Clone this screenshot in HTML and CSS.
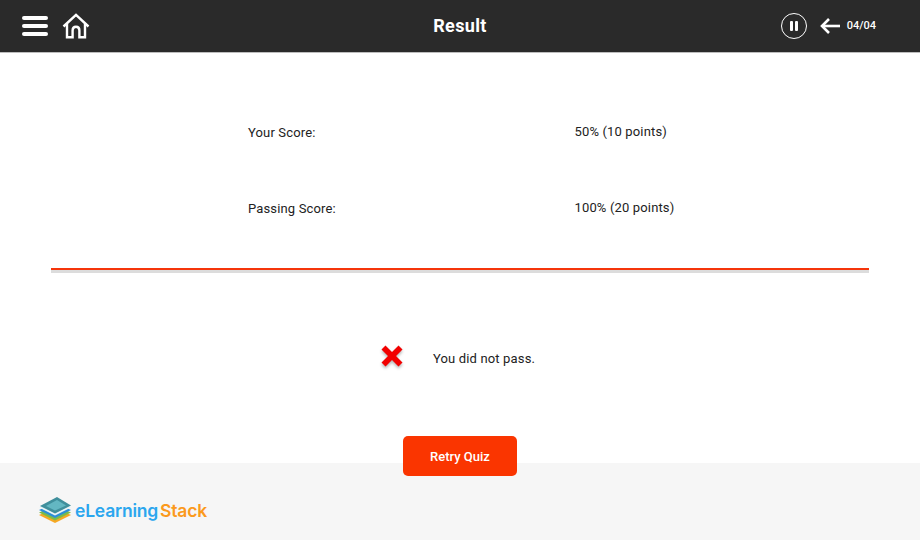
FILE: index.html
```html
<!DOCTYPE HTML>
<html>
<head>
<meta charset="utf-8">
<title>Result</title>
<link rel="stylesheet" href="styles.css">
</head>
<body>
<div class="topbar">
  <div class="topbar-left">
    <div class="burger"><span></span><span></span><span></span></div>
    <svg class="home" width="28" height="26" viewBox="0 0 28 26" fill="none" stroke="#fff" stroke-width="2.4" stroke-linejoin="miter">
      <path d="M1.5 13.5 L14 1.8 L26.5 13.5"/>
      <path d="M5 11 V24.2 H10.6 V17.5 Q10.6 13.8 14 13.8 Q17.4 13.8 17.4 17.5 V24.2 H23 V11"/>
    </svg>
  </div>
  <h1 class="title">Result</h1>
  <div class="topbar-right">
    <div class="pause"><span></span><span></span></div>
    <svg class="back" width="20" height="16" viewBox="0 0 20 16" fill="none" stroke="#fff" stroke-width="2.6">
      <path d="M20 8 H2"/>
      <path d="M9 1 L2 8 L9 15"/>
    </svg>
    <span class="counter">04/04</span>
  </div>
</div>

<div class="content">
  <div class="scores">
    <div class="score-row">
      <span class="score-label">Your Score:</span>
      <span class="score-value">50% (10 points)</span>
    </div>
    <div class="score-row">
      <span class="score-label">Passing Score:</span>
      <span class="score-value">100% (20 points)</span>
    </div>
  </div>
  <div class="divider"></div>
  <div class="verdict">
    <svg class="cross" width="24" height="28" viewBox="0 0 24 28">
      <path class="cross-mark" d="M1.5 5.5 L5.5 1.5 L12 8 L18.5 1.5 L22.5 5.5 L16 12 L22.5 18.5 L18.5 22.5 L12 16 L5.5 22.5 L1.5 18.5 L8 12 Z"/>
    </svg>
    <span class="verdict-text">You did not pass.</span>
  </div>
  <button class="retry">Retry Quiz</button>
</div>

<div class="footer">
  <div class="logo">
    <svg width="34" height="28" viewBox="0 0 34 28">
      <path d="M17 12 L33 19 L17 27 L1 19 Z" fill="#f7a823"/>
      <path d="M17 9.5 L33 16.5 L17 24.5 L1 16.5 Z" fill="#7cbb4a"/>
      <path d="M17 7 L33 14 L17 22 L1 14 Z" fill="#2d8fd8"/>
      <path d="M17 4.5 L33 11.5 L17 19.5 L1 11.5 Z" fill="#e9f4f6"/>
      <path d="M19 1 L33 9.5 L17 17.5 L2 10 Z" fill="#3f8f9c"/>
      <path d="M19 4 L28 9.5 L17 14.5 L8 10 Z" fill="#63b7c2"/>
    </svg>
    <span class="logo-text"><span class="logo-blue">eLearning</span><span class="logo-orange">Stack</span></span>
  </div>
</div>
</body>
</html>
```

FILE: styles.css
```css
* {
  box-sizing: border-box;
}

html, body {
  margin: 0;
  height: 540px;
  overflow: hidden;
}

body {
  display: flex;
  flex-direction: column;
  font-family: Roboto, "Liberation Sans", sans-serif;
  font-size: 13px;
  color: #222222;
  background: #ffffff;
}

/* top bar */
.topbar {
  height: 53px;
  flex: none;
  display: flex;
  align-items: center;
  justify-content: space-between;
  position: relative;
  padding: 0 44px 1px 22px;
  background: #2a2a2a;
  border-bottom: 1px solid #bdbdbd;
  color: #ffffff;
}

.topbar-left, .topbar-right {
  display: flex;
  align-items: center;
}

.burger {
  width: 26px;
  display: flex;
  flex-direction: column;
  gap: 4px;
  margin-right: 14px;
}

.burger span {
  height: 4px;
  border-radius: 2px;
  background: #ffffff;
}

.title {
  position: absolute;
  left: 0;
  right: 0;
  margin: 0;
  text-align: center;
  font-size: 18px;
  font-weight: 700;
  letter-spacing: 0.35px;
}

.pause {
  width: 26px;
  height: 26px;
  border: 1.5px solid #ffffff;
  border-radius: 50%;
  display: flex;
  align-items: center;
  justify-content: center;
  gap: 2px;
  margin-right: 13px;
}

.pause span {
  width: 3px;
  height: 10px;
  border-radius: 1px;
  background: #ffffff;
}

.back {
  margin-right: 7px;
}

.counter {
  font-size: 11px;
  font-weight: 500;
}

/* score table */
.content {
  flex: 1;
  display: flex;
  flex-direction: column;
  align-items: center;
  position: relative;
  z-index: 1;
  margin-bottom: -13px;
  letter-spacing: 0.15px;
}

.scores {
  width: 100%;
  height: 215px;
  padding: 72px 0 0 248px;
  display: flex;
  flex-direction: column;
  gap: 60px;
  flex: none;
}

.score-row {
  display: grid;
  grid-template-columns: 326.5px auto;
  height: 16px;
  line-height: 16px;
}

.score-value {
  margin-top: -1px;
}

.divider {
  width: 818px;
  height: 5px;
  flex: none;
  border-top: 2px solid #f5350b;
  background: #dcdcdc;
}

.verdict {
  display: flex;
  align-items: center;
  align-self: flex-start;
  margin: 71px 0 0 380px;
  height: 28px;
}

.cross {
  margin-right: 29px;
  filter: drop-shadow(0 2px 1.5px rgba(0, 0, 0, 0.3));
}

.cross-mark {
  fill: #f20000;
}

.retry {
  width: 114px;
  height: 40px;
  margin-top: 64px;
  border: none;
  border-radius: 5px;
  background: #fa3500;
  color: #ffffff;
  font-family: inherit;
  font-size: 13px;
  font-weight: 500;
}

/* footer */
.footer {
  height: 77px;
  flex: none;
  display: flex;
  align-items: center;
  padding: 17px 0 0 38px;
  background: #f6f6f6;
}

.logo {
  display: flex;
  align-items: center;
  gap: 3px;
}

.logo-text {
  font-family: Inter, sans-serif;
  font-size: 17.5px;
  font-weight: 600;
  letter-spacing: -0.2px;
}

.logo-blue {
  color: #2ba6ee;
  margin-right: 2px;
}

.logo-orange {
  color: #fb9a1d;
}
```
